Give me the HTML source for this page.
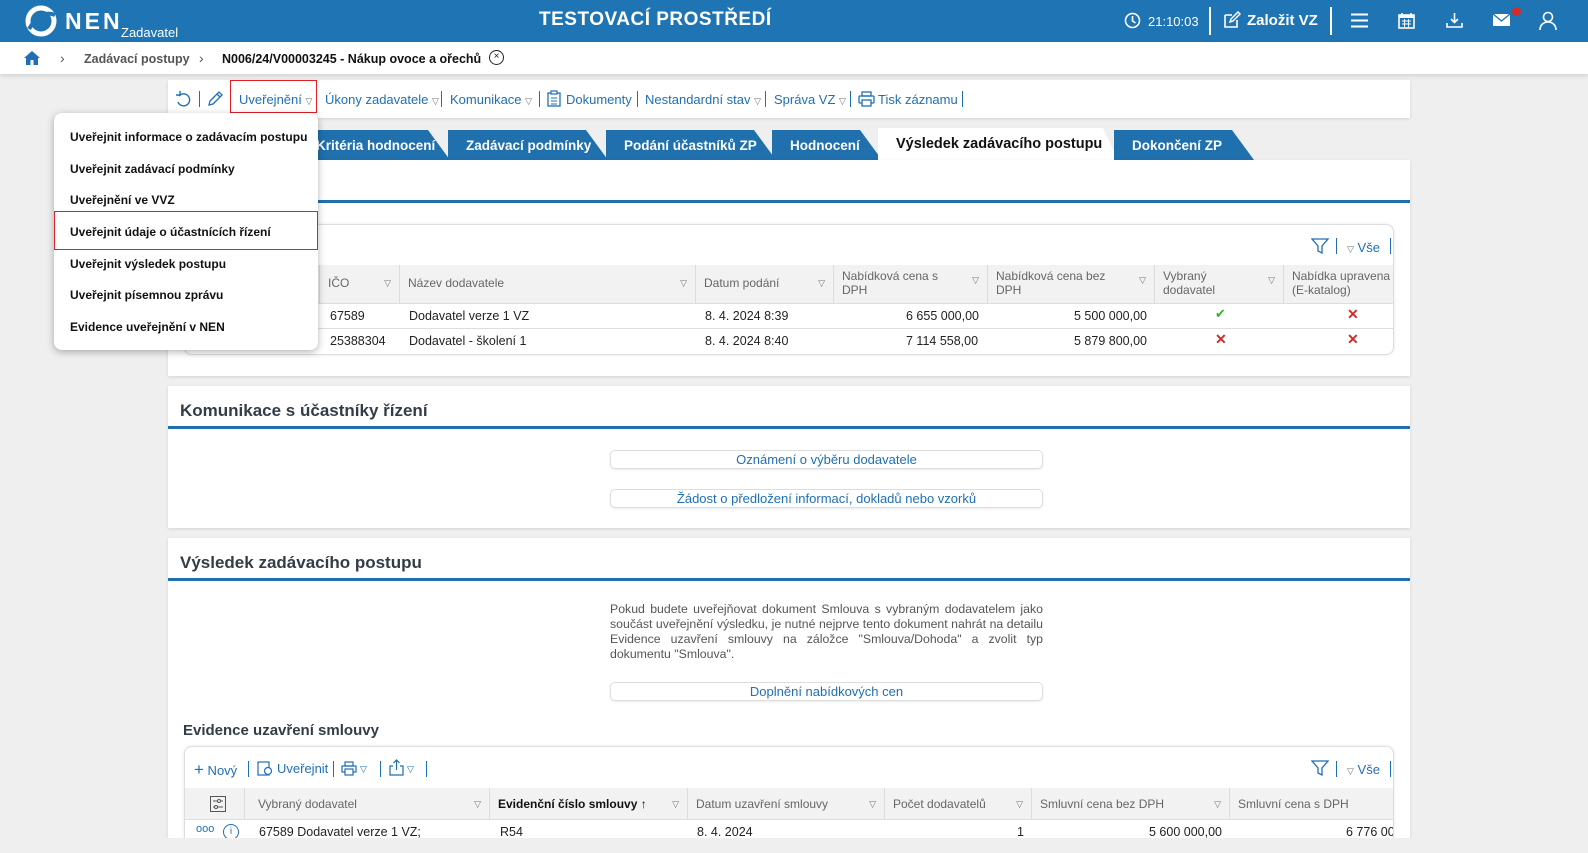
<!DOCTYPE html>
<html><head><meta charset="utf-8"><style>
*{box-sizing:border-box;margin:0;padding:0}
body{width:1588px;height:853px;overflow:hidden;background:#efefef;font-family:"Liberation Sans",Arial,sans-serif;font-size:13px;color:#222;position:relative}
.a{position:absolute;white-space:nowrap}
.hdr{left:0;top:0;width:1588px;height:42px;background:#1f74b3}
.w{color:#fff}
.bc{left:0;top:42px;width:1588px;height:32px;background:#fff;box-shadow:0 2px 4px rgba(0,0,0,.12)}
.panel{background:#fff;box-shadow:0 1px 3px rgba(0,0,0,.12)}
.lnk{color:#1f6fb5}
.tab{height:30px;top:130px;background:#1f70ad;color:#fff;font-weight:bold;font-size:13.5px;line-height:32px;padding-left:18px;clip-path:polygon(0 0,calc(100% - 22px) 0,100% 100%,0 100%)}
.bl{height:3px;background:#1f70ad}
.h2{font-size:17px;font-weight:bold;color:#333d47}
.btn{border:1px solid #ddd;border-radius:5px;background:#fff;height:19px;text-align:center;line-height:17px;color:#1f6fb5;box-shadow:0 1px 2px rgba(0,0,0,.08)}
.card{background:#fff;border:1px solid #ddd;border-radius:8px;box-shadow:0 0 3px rgba(0,0,0,.1);overflow:hidden}
.th{background:#f2f2f2;border-right:1px solid #ddd;border-bottom:1px solid #ddd;color:#666;font-size:12px;padding:4px 8px;white-space:normal;line-height:14px}
.tr{font-size:12.5px;color:#222}
.tri{color:#777;font-size:9px}
.menu{left:54px;top:113px;width:264px;height:237px;background:#fff;border-radius:8px;box-shadow:0 2px 8px rgba(0,0,0,.3)}
.mi{left:16px;font-size:12px;color:#111;font-weight:bold}
.sep{width:1px;height:16px;background:#1f6fb5}
</style></head><body>
<div class="a hdr"></div>
<svg class="a" style="left:24px;top:5px" width="34" height="32" viewBox="0 0 34 32"><circle cx="17" cy="16" r="13" fill="none" stroke="#fff" stroke-width="5"/><path d="M5 24 Q17 4 31 10" stroke="#1f74b3" stroke-width="4" fill="none"/></svg>
<div class="a w" style="left:65px;top:8px;font-size:23px;font-weight:bold;letter-spacing:3px">NEN</div>
<div class="a w" style="left:121px;top:25px;font-size:13px">Zadavatel</div>
<div class="a w" style="left:539px;top:9px;font-size:19px;font-weight:bold;letter-spacing:.5px">TESTOVACÍ PROSTŘEDÍ</div>
<svg class="a" style="left:1124px;top:12px" width="17" height="17"><circle cx="8.5" cy="8.5" r="7" fill="none" stroke="#fff" stroke-width="1.6"/><path d="M8.5 4v5l3 2" stroke="#fff" stroke-width="1.6" fill="none"/></svg>
<div class="a w" style="left:1148px;top:14px;font-size:13px">21:10:03</div>
<div class="a" style="left:1209px;top:7px;width:2px;height:28px;background:#fff"></div>
<svg class="a" style="left:1223px;top:11px" width="18" height="18"><path d="M2 4h7M2 4v12h12v-7" stroke="#fff" stroke-width="1.6" fill="none"/><path d="M7 11l1-3 7-7 2 2-7 7z" stroke="#fff" stroke-width="1.5" fill="none"/></svg>
<div class="a w" style="left:1247px;top:12px;font-size:15px;font-weight:bold">Založit VZ</div>
<div class="a" style="left:1330px;top:7px;width:2px;height:28px;background:#fff"></div>
<svg class="a" style="left:1351px;top:13px" width="17" height="15"><path d="M0 1.5h17M0 7.5h17M0 13.5h17" stroke="#fff" stroke-width="2"/></svg>
<svg class="a" style="left:1398px;top:12px" width="17" height="17"><rect x="1" y="3" width="15" height="13" fill="none" stroke="#fff" stroke-width="1.6"/><rect x="1" y="3" width="15" height="3" fill="#fff"/><path d="M4 1v3M13 1v3" stroke="#fff" stroke-width="1.6"/><path d="M4 9h9M4 12h9M6.5 7v8M10.5 7v8" stroke="#fff" stroke-width=".9"/></svg>
<svg class="a" style="left:1446px;top:12px" width="17" height="17"><path d="M8.5 1v9M5 7l3.5 3.5L12 7" stroke="#fff" stroke-width="1.6" fill="none"/><path d="M1 11v4h15v-4" stroke="#fff" stroke-width="1.6" fill="none"/></svg>
<svg class="a" style="left:1492px;top:13px" width="19" height="14"><rect x="1" y="1" width="17" height="12" fill="#fff"/><path d="M1 1l8.5 7 8.5-7" stroke="#1f74b3" stroke-width="1.3" fill="none"/></svg>
<div class="a" style="left:1512px;top:7px;width:9px;height:9px;border-radius:50%;background:#d42b2b"></div>
<svg class="a" style="left:1539px;top:11px" width="18" height="19"><circle cx="9" cy="6" r="4.5" fill="none" stroke="#fff" stroke-width="1.6"/><path d="M1 19c0-5 3.5-8 8-8s8 3 8 8" stroke="#fff" stroke-width="1.6" fill="none"/></svg>

<div class="a bc"></div>
<svg class="a" style="left:23px;top:50px" width="18" height="16"><path d="M9 1L1 8h2v7h4.5v-5h3v5H15V8h2z" fill="#1f6fb5"/></svg>
<div class="a" style="left:60px;top:50px;color:#555;font-size:14px">&#x203A;</div>
<div class="a" style="left:84px;top:52px;color:#555;font-weight:bold;font-size:12.5px">Zadávací postupy</div>
<div class="a" style="left:199px;top:50px;color:#555;font-size:14px">&#x203A;</div>
<div class="a" style="left:222px;top:52px;color:#111;font-weight:bold;font-size:12.5px">N006/24/V00003245 - Nákup ovoce a ořechů</div>
<div class="a" style="left:489px;top:50px;width:15px;height:15px;border:1.5px solid #222;border-radius:50%;font-size:10px;line-height:12px;text-align:center">×</div>

<div class="a panel" style="left:168px;top:80px;width:1242px;height:38px"></div>
<svg class="a" style="left:175px;top:91px" width="17" height="17"><path d="M4 5A6 6 0 1 1 3 11" stroke="#1f6fb5" stroke-width="1.4" fill="none"/><path d="M1 4h4V0" stroke="#1f6fb5" stroke-width="1.4" fill="none"/></svg>
<div class="a sep" style="left:199px;top:91px"></div>
<svg class="a" style="left:206px;top:90px" width="18" height="18"><path d="M3 15l1-4 9-9 3 3-9 9z M11 4l3 3" stroke="#1f6fb5" stroke-width="1.3" fill="none"/></svg>
<div class="a" style="left:230px;top:80px;width:87px;height:33px;border:1.5px solid #e31e24"></div>
<div class="a lnk" style="left:239px;top:92px">Uveřejnění <span class="tri">▽</span></div>
<div class="a lnk" style="left:325px;top:92px">Úkony zadavatele <span class="tri">▽</span></div>
<div class="a sep" style="left:441px;top:91px"></div>
<div class="a lnk" style="left:450px;top:92px">Komunikace <span class="tri">▽</span></div>
<div class="a sep" style="left:539px;top:91px"></div>
<svg class="a" style="left:547px;top:90px" width="14" height="17"><rect x="1" y="3" width="12" height="13" fill="none" stroke="#1f6fb5" stroke-width="1.3"/><rect x="4" y="1" width="6" height="3" fill="#fff" stroke="#1f6fb5" stroke-width="1.2"/><path d="M4 8h6M4 11h6M4 14h6" stroke="#1f6fb5"/></svg>
<div class="a lnk" style="left:566px;top:92px">Dokumenty</div>
<div class="a sep" style="left:637px;top:91px"></div>
<div class="a lnk" style="left:645px;top:92px">Nestandardní stav <span class="tri">▽</span></div>
<div class="a sep" style="left:765px;top:91px"></div>
<div class="a lnk" style="left:774px;top:92px">Správa VZ <span class="tri">▽</span></div>
<div class="a sep" style="left:850px;top:91px"></div>
<svg class="a" style="left:858px;top:91px" width="17" height="16"><rect x="4" y="1" width="9" height="4" fill="none" stroke="#1f6fb5" stroke-width="1.3"/><rect x="1" y="5" width="15" height="7" rx="1" fill="none" stroke="#1f6fb5" stroke-width="1.3"/><rect x="4" y="9" width="9" height="6" fill="#fff" stroke="#1f6fb5" stroke-width="1.3"/></svg>
<div class="a lnk" style="left:878px;top:92px">Tisk záznamu</div>
<div class="a sep" style="left:962px;top:91px"></div>

<div class="a tab" style="left:290px;width:160px;padding-left:26px">Kritéria hodnocení</div>
<div class="a tab" style="left:448px;width:160px">Zadávací podmínky</div>
<div class="a tab" style="left:606px;width:170px">Podání účastníků ZP</div>
<div class="a tab" style="left:772px;width:110px">Hodnocení</div>
<div class="a" style="left:878px;top:128px;width:240px;height:32px;background:#fff;clip-path:polygon(0 0,225px 0,100% 100%,0 100%);font-weight:bold;font-size:14.5px;padding:8px 0 0 18px;color:#111">Výsledek zadávacího postupu</div>
<div class="a tab" style="left:1114px;width:140px">Dokončení ZP</div>

<div class="a panel" style="left:168px;top:160px;width:1242px;height:216px"></div>
<div class="a bl" style="left:168px;top:200px;width:1242px"></div>
<div class="a card" style="left:184px;top:224px;width:1210px;height:131px"></div>
<svg class="a" style="left:1311px;top:238px" width="18" height="16"><path d="M1 1h16l-6 7v7l-4-2V8z" stroke="#1f6fb5" stroke-width="1.3" fill="none"/></svg>
<div class="a sep" style="left:1336px;top:238px"></div>
<div class="a lnk" style="left:1347px;top:240px"><span class="tri">▽</span> Vše</div>
<div class="a sep" style="left:1390px;top:238px"></div>
<div class="a th" style="left:185px;top:265px;width:135px;height:39px"></div>
<div class="a th" style="left:320px;top:265px;width:80px;height:39px;padding-top:11px">IČO<span class="tri" style="float:right">▽</span></div>
<div class="a th" style="left:400px;top:265px;width:296px;height:39px;padding-top:11px">Název dodavatele<span class="tri" style="float:right">▽</span></div>
<div class="a th" style="left:696px;top:265px;width:138px;height:39px;padding-top:11px">Datum podání<span class="tri" style="float:right">▽</span></div>
<div class="a th" style="left:834px;top:265px;width:154px;height:39px">Nabídková cena s<span class="tri" style="float:right;margin-top:4px">▽</span><br>DPH</div>
<div class="a th" style="left:988px;top:265px;width:167px;height:39px">Nabídková cena bez<span class="tri" style="float:right;margin-top:4px">▽</span><br>DPH</div>
<div class="a th" style="left:1155px;top:265px;width:129px;height:39px">Vybraný<span class="tri" style="float:right;margin-top:4px">▽</span><br>dodavatel</div>
<div class="a th" style="left:1284px;top:265px;width:109px;height:39px;border-right:0;white-space:nowrap;overflow:hidden">Nabídka upravena<br>(E-katalog)</div>
<div class="a" style="left:185px;top:328px;width:1208px;height:1px;background:#ddd"></div>
<div class="a tr" style="left:330px;top:309px">67589</div>
<div class="a tr" style="left:409px;top:309px">Dodavatel verze 1 VZ</div>
<div class="a tr" style="left:705px;top:309px">8. 4. 2024 8:39</div>
<div class="a tr" style="left:906px;top:309px">6 655 000,00</div>
<div class="a tr" style="left:1074px;top:309px">5 500 000,00</div>
<div class="a" style="left:1215px;top:306px;color:#3aaa35;font-size:13px">✔</div>
<div class="a" style="left:1347px;top:306px;color:#d42b2b;font-size:14px;font-weight:bold">✕</div>
<div class="a tr" style="left:330px;top:334px">25388304</div>
<div class="a tr" style="left:409px;top:334px">Dodavatel - školení 1</div>
<div class="a tr" style="left:705px;top:334px">8. 4. 2024 8:40</div>
<div class="a tr" style="left:906px;top:334px">7 114 558,00</div>
<div class="a tr" style="left:1074px;top:334px">5 879 800,00</div>
<div class="a" style="left:1215px;top:331px;color:#d42b2b;font-size:14px;font-weight:bold">✕</div>
<div class="a" style="left:1347px;top:331px;color:#d42b2b;font-size:14px;font-weight:bold">✕</div>

<div class="a panel" style="left:168px;top:386px;width:1242px;height:142px"></div>
<div class="a h2" style="left:180px;top:401px">Komunikace s účastníky řízení</div>
<div class="a bl" style="left:168px;top:426px;width:1242px"></div>
<div class="a btn" style="left:610px;top:450px;width:433px">Oznámení o výběru dodavatele</div>
<div class="a btn" style="left:610px;top:489px;width:433px">Žádost o předložení informací, dokladů nebo vzorků</div>

<div class="a panel" style="left:168px;top:538px;width:1242px;height:315px"></div>
<div class="a h2" style="left:180px;top:553px">Výsledek zadávacího postupu</div>
<div class="a bl" style="left:168px;top:578px;width:1242px"></div>
<div class="a" style="left:610px;top:602px;width:433px;white-space:normal;text-align:justify;font-size:12.3px;line-height:15px;color:#555">Pokud budete uveřejňovat dokument Smlouva s vybraným dodavatelem jako součást uveřejnění výsledku, je nutné nejprve tento dokument nahrát na detailu Evidence uzavření smlouvy na záložce "Smlouva/Dohoda" a zvolit typ dokumentu "Smlouva".</div>
<div class="a btn" style="left:610px;top:682px;width:433px">Doplnění nabídkových cen</div>
<div class="a" style="left:183px;top:722px;font-size:15px;font-weight:bold;color:#333d47">Evidence uzavření smlouvy</div>
<div class="a card" style="left:184px;top:746px;width:1210px;height:107px;border-bottom:0;border-radius:8px 8px 0 0"></div>
<div class="a lnk" style="left:194px;top:760px;font-size:13px"><span style="font-size:17px">+</span> Nový</div>
<div class="a sep" style="left:248px;top:761px"></div>
<svg class="a" style="left:257px;top:760px" width="16" height="16"><rect x="1" y="2" width="11" height="13" fill="none" stroke="#1f6fb5" stroke-width="1.2"/><circle cx="11" cy="11" r="3.5" fill="#fff" stroke="#1f6fb5" stroke-width="1.2"/></svg>
<div class="a lnk" style="left:277px;top:761px">Uveřejnit</div>
<div class="a sep" style="left:333px;top:761px"></div>
<svg class="a" style="left:341px;top:761px" width="16" height="15"><rect x="4" y="1" width="8" height="4" fill="none" stroke="#1f6fb5" stroke-width="1.2"/><rect x="1" y="5" width="14" height="6" fill="none" stroke="#1f6fb5" stroke-width="1.2"/><rect x="4" y="8" width="8" height="6" fill="#fff" stroke="#1f6fb5" stroke-width="1.2"/></svg>
<div class="a tri" style="left:360px;top:764px;color:#1f6fb5">▽</div>
<div class="a sep" style="left:380px;top:761px"></div>
<svg class="a" style="left:389px;top:759px" width="15" height="17"><path d="M4 7H1v9h13V7h-3M7.5 11V1M4.5 4l3-3 3 3" stroke="#1f6fb5" stroke-width="1.2" fill="none"/></svg>
<div class="a tri" style="left:407px;top:764px;color:#1f6fb5">▽</div>
<div class="a sep" style="left:426px;top:761px"></div>
<svg class="a" style="left:1311px;top:760px" width="18" height="16"><path d="M1 1h16l-6 7v7l-4-2V8z" stroke="#1f6fb5" stroke-width="1.3" fill="none"/></svg>
<div class="a sep" style="left:1336px;top:761px"></div>
<div class="a lnk" style="left:1347px;top:762px"><span class="tri">▽</span> Vše</div>
<div class="a sep" style="left:1390px;top:761px"></div>
<div class="a th" style="left:185px;top:788px;width:60px;height:32px"></div>
<svg class="a" style="left:210px;top:796px" width="16" height="16"><rect x=".5" y=".5" width="15" height="15" fill="none" stroke="#555"/><path d="M3 5h10M3 11h10" stroke="#555"/><circle cx="9" cy="5" r="1.5" fill="#fff" stroke="#555"/><circle cx="6" cy="11" r="1.5" fill="#fff" stroke="#555"/></svg>
<div class="a th" style="left:245px;top:788px;width:245px;height:32px;padding-top:9px;padding-left:13px">Vybraný dodavatel<span class="tri" style="float:right">▽</span></div>
<div class="a th" style="left:490px;top:788px;width:198px;height:32px;padding-top:9px;color:#111;font-weight:bold">Evidenční číslo smlouvy ↑<span class="tri" style="float:right;font-weight:normal">▽</span></div>
<div class="a th" style="left:688px;top:788px;width:197px;height:32px;padding-top:9px">Datum uzavření smlouvy<span class="tri" style="float:right">▽</span></div>
<div class="a th" style="left:885px;top:788px;width:147px;height:32px;padding-top:9px">Počet dodavatelů<span class="tri" style="float:right">▽</span></div>
<div class="a th" style="left:1032px;top:788px;width:198px;height:32px;padding-top:9px">Smluvní cena bez DPH<span class="tri" style="float:right">▽</span></div>
<div class="a th" style="left:1230px;top:788px;width:163px;height:32px;padding-top:9px;border-right:0">Smluvní cena s DPH</div>
<div class="a lnk" style="left:196px;top:823px;font-size:11px">ooo</div>
<div class="a" style="left:223px;top:824px;width:16px;height:16px;border:1.3px solid #1f6fb5;border-radius:50%;color:#1f6fb5;font-size:10px;text-align:center;line-height:14px">i</div>
<div class="a tr" style="left:259px;top:825px">67589 Dodavatel verze 1 VZ;</div>
<div class="a tr" style="left:500px;top:825px">R54</div>
<div class="a tr" style="left:697px;top:825px">8. 4. 2024</div>
<div class="a tr" style="left:1017px;top:825px">1</div>
<div class="a tr" style="left:1149px;top:825px">5 600 000,00</div>
<div class="a tr" style="left:1346px;top:825px;width:47px;overflow:hidden">6 776 000,00</div>
<div class="a" style="left:0;top:838px;width:1588px;height:15px;background:#efefef"></div>

<div class="a menu"></div>
<div class="a" style="left:54px;top:113px;width:264px;height:237px">
<div class="a mi" style="top:17px">Uveřejnit informace o zadávacím postupu</div>
<div class="a mi" style="top:49px">Uveřejnit zadávací podmínky</div>
<div class="a mi" style="top:80px">Uveřejnění ve VVZ</div>
<div class="a" style="left:0;top:98px;width:264px;height:39px;border:1.5px solid #e31e24"></div>
<div class="a mi" style="top:112px">Uveřejnit údaje o účastnících řízení</div>
<div class="a mi" style="top:144px">Uveřejnit výsledek postupu</div>
<div class="a mi" style="top:175px">Uveřejnit písemnou zprávu</div>
<div class="a mi" style="top:207px">Evidence uveřejnění v NEN</div>
</div>
</body></html>
